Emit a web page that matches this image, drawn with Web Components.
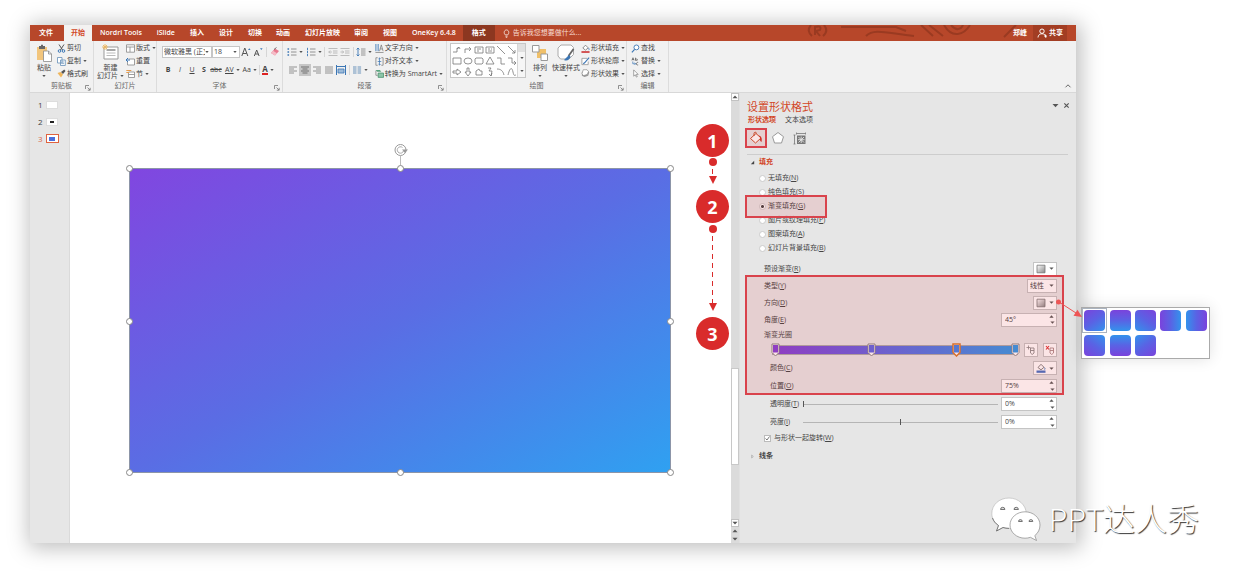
<!DOCTYPE html>
<html lang="zh-CN">
<head>
<meta charset="utf-8">
<title>PowerPoint</title>
<style>
  body {
    margin: 0;
    background: #fff;
    color: #444;
    font: 7px/10px "Open Sans", "Noto Sans CJK SC", sans-serif;
  }
</style>
</head>
<body>
<ppt-app></ppt-app>

<script>
const BASE = `
  * { box-sizing: border-box; }
  button, input, select {
    margin: 0; padding: 0; border: 0; border-radius: 0;
    background: none; color: inherit; font: inherit; appearance: none; outline: 0;
  }
  button { display: inline-flex; align-items: center; white-space: nowrap; }
  svg { display: block; }
`;

function define(name, html, setup) {
  customElements.define(name, class extends HTMLElement {
    constructor() {
      super();
      this.attachShadow({ mode: "open" });
    }

    connectedCallback() {
      const markup = typeof html === "function" ? html(this) : html;
      this.shadowRoot.innerHTML = `<style>${BASE}</style>${markup}`;
      if (setup) setup(this);
    }
  });
}

// name: [viewBox size, content]
const ICONS = {
  caret: [4, `<path d="M.3 1.1h3.400L2 3z" fill="#555"/>`],
  launcher: [6, `<path d="M.5 4V.5H4M2.5 2.5l2.5 2.5M5.2 2.8v2.4H2.8" fill="none" stroke="#777" stroke-width=".8"/>`],
  paste: [18, `<path d="M2 3h10v13H2z" fill="#f2c57c"/><path d="M4 2h6v3H4z" fill="#666"/><path d="M6 .8h2v2H6z" fill="#666"/><path d="M8.500 7h5l3 3v7.500h-8z" fill="#fff" stroke="#8a8a8a" stroke-width=".8"/><path d="M13.500 7v3h3" fill="none" stroke="#8a8a8a" stroke-width=".8"/>`],
  cut: [9, `<path d="M2 .5l3.600 5.500M7 .5L3.400 6" stroke="#555" fill="none"/><circle cx="2.500" cy="7" r="1.300" fill="none" stroke="#3c77b5"/><circle cx="6.500" cy="7" r="1.300" fill="none" stroke="#3c77b5"/>`],
  copy: [9, `<path d="M.5.5h4.500v5.500H.5zM3.500 3h4.800v5.500H3.500z" fill="#fff" stroke="#668fb8" stroke-width=".8"/><path d="M4.600 5h2.500M4.600 6.600h2.500" stroke="#668fb8" stroke-width=".7"/>`],
  brush: [9, `<path d="M.5 4l3-1 2.500 2.500-2 3z" fill="#efb65c"/><path d="M4 3l2 2 2.500-3L7.300.6z" fill="#555"/>`],
  newslide: [18, `<path d="M2 3h14v12H2z" fill="#fff" stroke="#999"/><path d="M4.500 6h9" stroke="#888" stroke-width="1.500"/><path d="M4.500 9h9M4.500 11.500h9" stroke="#bbb"/><path d="M3 0v6M0 3h6M1 1l4 4M5 1L1 5" stroke="#efb65c" stroke-width=".9"/>`],
  layout: [9, `<path d="M.5.8h8v7.400h-8zM.5 3h8M4 3v5" fill="#fff" stroke="#888" stroke-width=".8"/>`],
  reset: [9, `<path d="M2.500 2h6v6h-7V5" fill="#fff" stroke="#888" stroke-width=".8"/><path d="M0 3h4M2 1L0 3l2 2" fill="none" stroke="#3c77b5"/>`],
  section: [9, `<path d="M2.500 3h6v5.500h-6zM2.500 5.500h6" fill="#fff" stroke="#888" stroke-width=".8"/><path d="M.3 1.500h5M.3 3.500h3" stroke="#e59a4b"/>`],
  growfont: [10, `<path d="M.8 9l3-8 3 8M1.900 6.500h3.800" fill="none" stroke="#555"/><path d="M7 3l1.300-1.800L9.600 3z" fill="#3c77b5"/>`],
  shrinkfont: [10, `<path d="M1.300 9l2.400-6 2.400 6M2.300 7h2.900" fill="none" stroke="#555"/><path d="M7 1.300l1.300 1.800 1.300-1.800z" fill="#3c77b5"/>`],
  eraser: [10, `<path d="M1 6l4-4.500L9 4 5 8.500z" fill="#e8798f"/><path d="M1 6l2-2.200 4 2.500L5 8.500z" fill="#f5bcc7"/><path d="M4 2.500L6.500.5" stroke="#555" stroke-width=".8"/>`],
  bullets: [10, `<path d="M.5 2h1.600M.5 5h1.600M.5 8h1.600" stroke="#3c77b5" stroke-width="1.500"/><path d="M4 2h5.500M4 5h5.500M4 8h5.500" stroke="#888" stroke-width=".9"/>`],
  numbering: [10, `<path d="M1.500.8v2.400M1.500 3.900v2.300M1.500 6.900v2.300" stroke="#3c77b5" stroke-width=".9"/><path d="M4 2h5.500M4 5h5.500M4 8h5.500" stroke="#888" stroke-width=".9"/>`],
  outdent: [10, `<path d="M.5 1.500h9M5 4h4.500M5 6h4.500M.5 8.500h9M3.800 5H.8M2.200 3.500L.7 5l1.500 1.500" fill="none" stroke="#b5b5b5" stroke-width=".9"/>`],
  indent: [10, `<path d="M.5 1.500h9M5 4h4.500M5 6h4.500M.5 8.500h9M.5 5h3M2.200 3.500L3.700 5 2.200 6.500" fill="none" stroke="#b5b5b5" stroke-width=".9"/>`],
  spacing: [10, `<path d="M2 1v8M.6 2.500L2 1l1.400 1.500M.6 7.500L2 9l1.400-1.500" fill="none" stroke="#3c77b5" stroke-width=".9"/><path d="M5 2h4.500M5 4h4.500M5 6h4.500M5 8h4.500" stroke="#888" stroke-width=".9"/>`],
  left: [10, `<path d="M1 2h8M1 4h5M1 6h8M1 8h5" stroke="#888" stroke-width=".9"/>`],
  center: [10, `<path d="M1 2h8M2.500 4h5M1 6h8M2.500 8h5" stroke="#666" stroke-width=".9"/>`],
  right: [10, `<path d="M1 2h8M4 4h5M1 6h8M4 8h5" stroke="#888" stroke-width=".9"/>`],
  justify: [10, `<path d="M1 2h8M1 4h8M1 6h8M1 8h8" stroke="#888" stroke-width=".9"/>`],
  distribute: [10, `<path d="M.5 0v10M9.500 0v10M1 1.500h8" stroke="#3c77b5"/><path d="M2 4h6v4H2z" fill="#9dbbd9" stroke="#3c77b5" stroke-width=".8"/>`],
  columns: [10, `<path d="M1 2h3.500M1 4h3.500M1 6h3.500M1 8h3.500M5.600 2h3.500M5.600 4h3.500M5.600 6h3.500M5.600 8h3.500" stroke="#6b93bb"/>`],
  textdir: [10, `<path d="M1 0v8M3.500 0v8" stroke="#3c77b5"/><path d="M5 8l2-7 2 7M5.700 5.500h2.600M.5 9.500h9" fill="none" stroke="#777" stroke-width=".8"/>`],
  aligntext: [10, `<path d="M3 .8H1v8.400h2M7 .8h2v8.400H7" fill="none" stroke="#777" stroke-width=".8"/><path d="M5 1v8M3.800 2.200L5 1l1.200 1.200M3.800 7.800L5 9l1.200-1.200M3 5h4" fill="none" stroke="#3c77b5" stroke-width=".8"/>`],
  smartart: [10, `<path d="M.5 1h5l1.500 2H2.500z" fill="#5aa37e"/><path d="M1 2v5h2" fill="none" stroke="#777" stroke-width=".8"/><path d="M3.500 4.500h6v4.800h-6z" fill="#8cc5a8" stroke="#3f8a64" stroke-width=".8"/>`],
  arrange: [18, `<path d="M6 5h9v9H6z" fill="#f0c069"/><path d="M1.500 1.500h6.500v6.500H1.500zM10 10h6.500v6.500H10z" fill="#fff" stroke="#999"/>`],
  styles: [18, `<path d="M4 1h10l2.500 2.500v7L12 15H3.500L1 12V4z" fill="#fff" stroke="#aaa"/><path d="M16.500 5l-5 7" stroke="#666" stroke-width="1.800"/><path d="M12 11l-5 5c3 1.500 6-.5 6.500-3.500z" fill="#3c77b5"/>`],
  fill: [10, `<path d="M2 4.500L5 1.300l3 3L5 6.800z" fill="#fff" stroke="#666" stroke-width=".8"/><path d="M8.300 4.500c1 1.300 1 1.800.3 2" stroke="#3c77b5" fill="none"/><path d="M.5 8h9v1.800h-9z" fill="#c33"/>`],
  bluefill: [10, `<path d="M2 4.500L5 1.300l3 3L5 6.800z" fill="#fff" stroke="#666" stroke-width=".8"/><path d="M8.300 4.500c1 1.300 1 1.800.3 2" stroke="#3c77b5" fill="none"/><path d="M.5 7.500h9v2.300h-9z" fill="#4472c4"/>`],
  outline: [10, `<path d="M7 1.500H1v7h7V5" fill="#fff" stroke="#888" stroke-width=".8"/><path d="M9 .8L4 6.500l-1.500 1" stroke="#3c77b5" stroke-width="1.300" fill="none"/>`],
  effects: [10, `<path d="M3 1h4l2.200 2.500L8 7.500 4 9 1 7.500V4z" fill="#999"/><path d="M2.500.8h4.200l1.600 2L7 6 3 7.300 1 5.500z" fill="#fff" stroke="#888" stroke-width=".7"/>`],
  find: [10, `<circle cx="6" cy="3.800" r="2.700" fill="#fff" stroke="#3c77b5"/><path d="M4 6L1 9.300" stroke="#3c77b5" stroke-width="1.300"/>`],
  replace: [10, `<path d="M1 3.800L2.200.8l1.200 3M1.400 2.800h1.700M5 .8v3h1.400a.7.700 0 000-1.500H5M8 8.800c-3 .8-2.500-3.500 0-2.800" fill="none" stroke="#555" stroke-width=".8"/><path d="M2 5v2.500h3M4 6.300l1.200 1.200L4 8.700" fill="none" stroke="#3c77b5" stroke-width=".8"/>`],
  select: [10, `<path d="M3 1v7l1.700-1.600L6 9l1-.5-1.200-2.500H8z" fill="#fff" stroke="#777" stroke-width=".7"/>`],
  bulb: [10, `<path d="M3.600 6.500C1.500 4.500 2.500 1 5 1s3.500 3.500 1.400 5.500zM3.800 8h2.400M4.200 9.300h1.600" fill="none" stroke="#fff" stroke-width=".8"/>`],
  person: [10, `<circle cx="5" cy="3.200" r="2.200" fill="none" stroke="#fff"/><path d="M1 9.500c0-5 8-5 8 0M7 8h3M8.500 6.500v3" fill="none" stroke="#fff" stroke-width=".9"/>`],
  bucket: [14, `<path d="M1.500 7.500L7 2.500l5 4.500-5.500 5z" fill="#fff" stroke="#c9502c"/><path d="M5 5V2.500C5 .8 7.500.8 7.500 2.500" fill="none" stroke="#c9502c"/><path d="M9.500 4.500c3 .5 3.800 3 3 6.500-1.500-1-2-2.500-1-4z" fill="#d02e22"/>`],
  pentagon: [14, `<path d="M7 1.500l5.500 4.200-2 6.300h-7l-2-6.300z" fill="#fff" stroke="#999"/>`],
  size: [14, `<path d="M3.500 2.500h9M1.500 4v9M.5 4h2M.5 13h2M3.500 1.500v2M12.500 1.500v2" stroke="#777" stroke-width=".8"/><path d="M4 4.500h8.500V13H4z" fill="#777"/><path d="M8.200 5.500v6.500M5 8.700h6.500M5.500 6l5.500 5.500M11 6l-5.500 5.500" stroke="#e6e6e6" stroke-width=".9"/>`],
  swatch: [10, `<defs><linearGradient id="g" x2="1" y2="1"><stop stop-color="#fff"/><stop offset="1" stop-color="#888"/></linearGradient></defs><path d="M1 1.200h8v7.600H1z" fill="url(#g)" stroke="#777" stroke-width=".8"/>`],
  addstop: [10, `<path d="M4.500 3h3.500v5L6.200 9.500 4.500 8zM4.500 5.500H8" fill="none" stroke="#888" stroke-width=".9"/><path d="M2.500.5v4M.5 2.500h4" stroke="#888" stroke-width=".8"/>`],
  delstop: [10, `<path d="M5 3h3.500v5L6.700 9.500 5 8zM5 5.500h3.500" fill="none" stroke="#a88" stroke-width=".9"/><path d="M1 1l3 3.500M4 1L1 4.500" stroke="#d33" stroke-width="1.100"/>`],
  tri: [6, `<path d="M5 1v4H1z" fill="#444"/>`],
  triopen: [6, `<path d="M2 1.200L4 3 2 4.800z" fill="none" stroke="#999" stroke-width=".7"/>`],
  close: [8, `<path d="M1.500 1.500l5 5M6.500 1.500l-5 5" stroke="#555" stroke-width="1.300"/>`],
  up: [8, `<path d="M1.500 5.300L4 2.800l2.500 2.500" fill="none" stroke="#666"/>`],
  wechat: [50, `<g stroke="#888" stroke-width=".7" fill="#fff"><path d="M18 1C8 1 .8 8 .8 16.500c0 5 2.500 9.300 6.700 12L5.500 34l6.500-3.500c2 .6 4 .9 6 .9 9.500 0 17.200-6.800 17.200-15S27.500 1 18 1z" stroke="#bbb"/><path d="M34 14.800c-8.300 0-15 6-15 13.200s6.700 13.200 15 13.200c1.900 0 3.800-.3 5.400-.9l6.100 3.200-1.700-4.900c3.300-2.500 5.200-6.300 5.200-10.600 0-7.300-6.700-13.200-15-13.200z"/><path d="M1.500 21c1 3 3 5.500 6 7.500L5.500 34l6.500-3.500c2 .6 4 .9 6 .9" fill="none" stroke="#555"/></g><g fill="#ddd" stroke="#666" stroke-width=".9"><path d="M9.500 12.500a2.200 2.200 0 014.400 0zM23 12.500a2.200 2.200 0 014.400 0zM27.500 24.500a1.900 1.900 0 013.800 0zM38 24.500a1.900 1.900 0 013.800 0z"/></g>`],
};

define("ui-icon", el => {
  const [box, art] = ICONS[el.getAttribute("name")];
  const size = el.getAttribute("size") || 10;
  return `
    <style>:host { display: block; flex: none; }</style>
    <svg width="${size}" height="${size}" viewBox="0 0 ${box} ${box}" aria-hidden="true">${art}</svg>
  `;
});

/* ---------- title bar ---------- */

define("title-bar", `
  <style>
    :host { display: flex; position: relative; height: 16px; background: #b7472a; color: #fff; font-weight: 600; }
    nav { display: flex; }
    a { display: flex; align-items: center; padding: 0 7px; color: #fff; text-decoration: none; white-space: nowrap; }
    a + a { margin-left: 1px; }
    .file { padding: 0 10px 0 9px; }
    a.active { background: #f3f2f1; color: #d24726; }
    a.context { background: #8c3720; padding: 0 9px; margin-left: 0; }
    a.tight { margin-left: 0; }
    .tell { display: flex; align-items: center; gap: 2px; margin-left: 7px; }
    .tell input { width: 90px; font-weight: 400; }
    .tell input::placeholder { color: #f8ddd4; opacity: 1; }
    .art { position: absolute; right: 30px; top: 0; }
    .user { display: flex; align-items: center; margin-left: auto; padding-right: 6px; position: relative; }
    .share { align-self: stretch; gap: 2px; padding: 0 4px; margin: 0 9px 0 0; background: #a23d23; position: relative; }
  </style>
  <nav>
    <a href="#" class="file">文件</a><a href="#" class="active">开始</a><a href="#">Nordri Tools</a><a href="#">iSlide</a>
    <a href="#">插入</a><a href="#">设计</a><a href="#">切换</a><a href="#" class="tight">动画</a><a href="#">幻灯片放映</a>
    <a href="#" class="tight">审阅</a><a href="#">视图</a><a href="#">OneKey 6.4.8</a><a href="#" class="context">格式</a>
  </nav>
  <label class="tell"><ui-icon name="bulb" size="9"></ui-icon><input type="text" aria-label="告诉我" placeholder="告诉我您想要做什么..."></label>
  <svg class="art" width="240" height="16" viewBox="0 0 240 16" fill="none" stroke="#9a3a21" stroke-width="2" aria-hidden="true">
    <path d="M5 0q-5 6 1 11M18 0q5 6-1 11M9 10V2q7-2 5 3l-4 1 4 5M35 2h55l10 4M60 11c8-8 20-3 48 0M115 0l12 11M123 0l14 11M138 0c8 14 20 10 26 0M145 0c5 6 10 5 12 0M198 12l12-12"/>
  </svg>
  <div class="user"><span>郑峰</span></div>
  <button class="share"><ui-icon name="person"></ui-icon>共享</button>
`);

/* ---------- ribbon parts ---------- */

define("ribbon-group", el => `
  <style>
    :host { display: flex; flex-direction: column; position: relative; border-right: 1px solid #dcdcdc; padding-top: 1px; }
    .body { display: flex; height: 38px; }
    .name { text-align: center; color: #666; line-height: 12px; }
    .launch { position: absolute; right: 2px; bottom: 1px; }
  </style>
  <div class="body"><slot></slot></div>
  <div class="name">${el.getAttribute("label")}</div>
  ${el.hasAttribute("launch") ? `<button class="launch" aria-label="更多"><ui-icon name="launcher" size="6"></ui-icon></button>` : ""}
`);

define("small-button", el => `
  <style>
    :host { display: flex; height: 13px; align-items: center; }
    button { gap: 1px; }
    ui-icon[name=caret] { margin-left: 1px; }
  </style>
  <button><ui-icon name="${el.getAttribute("icon")}" size="9"></ui-icon><slot></slot>${el.hasAttribute("menu") ? `<ui-icon name="caret" size="4"></ui-icon>` : ""}</button>
`);

define("big-button", el => `
  <style>
    :host { display: block; }
    button { flex-direction: column; line-height: 8px; padding-top: 2px; gap: 2px; }
    .text { display: flex; flex-direction: column; align-items: center; }
    .last { display: flex; align-items: center; gap: 2px; min-height: 7px; }
  </style>
  <button>
    <ui-icon name="${el.getAttribute("icon")}" size="18"></ui-icon>
    <span class="text"><slot></slot><span class="last">${el.getAttribute("second") || ""}<ui-icon name="caret" size="4"></ui-icon></span></span>
  </button>
`);

define("tool-button", el => `
  <style>
    :host { display: flex; }
    button { min-width: 12px; height: 12px; justify-content: center; gap: 2px; }
    :host([pressed]) button { background: #c6c6c6; }
  </style>
  <button aria-label="${el.getAttribute("label") || ""}">
    ${el.hasAttribute("icon") ? `<ui-icon name="${el.getAttribute("icon")}"></ui-icon>` : ""}<slot></slot>${el.hasAttribute("menu") ? `<ui-icon name="caret" size="4"></ui-icon>` : ""}
  </button>
`);

const SHAPES = [
  "M1 7h4V3h2M5 4l2-2 1 2", "M2 8V4h5M6 2l2 2-2 2", "M1 2h8v6H1zM3 4h4M3 6h2", "M1 2h8v6H1zM3 4h2M6 4h1M3 6h4", "M1 1l8 8", "M1 1l7 7M8 5v3H5",
  "M1 2h8v6H1z", "M1 5a4 3 0 108 0 4 3 0 10-8 0z", "M2 2h6l1 1v4l-1 1H2L1 7V3z", "M5 1l4 7H1z", "M1 2h4v6h4", "M1 2h4v5h4M7 5l2 2-2 2",
  "M1 4h4V2l4 3-4 3V6H1z", "M4 1h2v4h2L5 9 2 5h2z", "M2 8V4l3-2 1 2h2v4z", "M3 1h3L4 4h3L6 9M4 7l2 2 1-3", "M1 2c4 0 6 2 7 6", "M1 8c2-8 4-8 5-3s2 3 3 3",
];

define("shape-gallery", `
  <style>
    :host { display: flex; height: 35px; margin: 1px 0 0; border: 1px solid #c6c6c6; background: #fff; }
    .shapes { display: grid; grid-template-columns: repeat(6, 11px); grid-template-rows: repeat(3, 11px); }
    .shapes button { justify-content: center; }
    .side { display: grid; width: 8px; border-left: 1px solid #d6d6d6; background: #f6f6f6; }
    .side button { justify-content: center; }
    .side button:first-child { background: #e0e0e0; }
  </style>
  <div class="shapes">${SHAPES.map(d => `<button aria-label="形状"><svg width="10" height="10" viewBox="0 0 10 10" fill="none" stroke="#777" stroke-width=".8"><path d="${d}"/></svg></button>`).join("")}</div>
  <div class="side"><button aria-label="上"></button><button aria-label="下"><ui-icon name="caret" size="4"></ui-icon></button><button aria-label="全部"><ui-icon name="caret" size="4"></ui-icon></button></div>
`);

define("ribbon-bar", `
  <style>
    :host { display: flex; position: relative; height: 52px; background: #f1f1f1; border-bottom: 1px solid #d8d8d8; }
    .col { display: flex; flex-direction: column; }
    .rows { display: flex; flex-direction: column; padding-top: 1px; }
    .row { display: flex; align-items: center; height: 18px; }
    .clip { width: 64px; } .slides { width: 63px; } .font { width: 126px; }
    .para { width: 164px; } .draw { width: 180px; } .edit { width: 42px; }
    .paste { margin: 0 4px 0 5px; }
    .new { margin: 0 2px 0 3px; }
    .arrange { margin: 0 2px 0 5px; }
    .styles { margin: 0 1px; }
    .combo { display: flex; align-items: center; height: 12px; border: 1px solid #c6c6c6; background: #fff; padding: 0 2px 0 1px; }
    .combo select { flex: 1; min-width: 0; }
    .face { width: 50px; } .pt { width: 28px; }
    .font .rows { padding-left: 5px; }
    .para .rows { padding-left: 4px; }
    .bar { width: 1px; height: 10px; background: #d6d6d6; margin: 0 2px; }
    .list { margin-right: 3px; }
    .a { border-bottom: 2px solid #d22; line-height: 8px; font-size: 8px; }
    .para .col { margin-left: auto; padding-right: 3px; }
    shape-gallery { margin-left: 3px; }
    .edit .col { padding-left: 4px; }
    .fold { position: absolute; right: 4px; bottom: 2px; }
    .text tool-button + tool-button[menu] { margin-left: 3px; }
  </style>
  <ribbon-group class="clip" label="剪贴板" launch>
    <big-button class="paste" icon="paste">粘贴</big-button>
    <div class="col">
      <small-button icon="cut">剪切</small-button>
      <small-button icon="copy" menu>复制</small-button>
      <small-button icon="brush">格式刷</small-button>
    </div>
  </ribbon-group>
  <ribbon-group class="slides" label="幻灯片">
    <big-button class="new" icon="newslide" second="幻灯片">新建</big-button>
    <div class="col">
      <small-button icon="layout" menu>版式</small-button>
      <small-button icon="reset">重置</small-button>
      <small-button icon="section" menu>节</small-button>
    </div>
  </ribbon-group>
  <ribbon-group class="font" label="字体" launch>
    <div class="rows">
      <div class="row">
        <span class="combo face"><select aria-label="字体"><option>微软雅黑 (正文</option></select><ui-icon name="caret" size="4"></ui-icon></span>
        <span class="combo pt"><select aria-label="字号"><option>18</option></select><ui-icon name="caret" size="4"></ui-icon></span>
        <tool-button icon="growfont" label="增大字号"></tool-button>
        <tool-button icon="shrinkfont" label="减小字号"></tool-button>
        <span class="bar"></span>
        <tool-button icon="eraser" label="清除格式"></tool-button>
      </div>
      <div class="row text">
        <tool-button><b>B</b></tool-button><tool-button><i>I</i></tool-button><tool-button><u>U</u></tool-button>
        <tool-button><b>S</b></tool-button><tool-button><s>abc</s></tool-button>
        <tool-button menu><u>AV</u></tool-button><tool-button menu>Aa</tool-button>
        <span class="bar"></span><tool-button menu><b class="a">A</b></tool-button>
      </div>
    </div>
  </ribbon-group>
  <ribbon-group class="para" label="段落" launch>
    <div class="rows">
      <div class="row">
        <tool-button class="list" icon="bullets" label="项目符号" menu></tool-button>
        <tool-button icon="numbering" label="编号" menu></tool-button><span class="bar"></span>
        <tool-button icon="outdent" label="减少缩进"></tool-button>
        <tool-button icon="indent" label="增加缩进"></tool-button><span class="bar"></span>
        <tool-button icon="spacing" label="行距" menu></tool-button>
      </div>
      <div class="row">
        <tool-button icon="left" label="左对齐"></tool-button>
        <tool-button icon="center" label="居中" pressed></tool-button>
        <tool-button icon="right" label="右对齐"></tool-button>
        <tool-button icon="justify" label="两端对齐"></tool-button>
        <tool-button icon="distribute" label="分散对齐"></tool-button><span class="bar"></span>
        <tool-button icon="columns" label="分栏" menu></tool-button>
      </div>
    </div>
    <div class="col">
      <small-button icon="textdir" menu>文字方向</small-button>
      <small-button icon="aligntext" menu>对齐文本</small-button>
      <small-button icon="smartart" menu>转换为 SmartArt</small-button>
    </div>
  </ribbon-group>
  <ribbon-group class="draw" label="绘图" launch>
    <shape-gallery></shape-gallery>
    <big-button class="arrange" icon="arrange">排列</big-button>
    <big-button class="styles" icon="styles">快速样式</big-button>
    <div class="col">
      <small-button icon="fill" menu>形状填充</small-button>
      <small-button icon="outline" menu>形状轮廓</small-button>
      <small-button icon="effects" menu>形状效果</small-button>
    </div>
  </ribbon-group>
  <ribbon-group class="edit" label="编辑">
    <div class="col">
      <small-button icon="find">查找</small-button>
      <small-button icon="replace" menu>替换</small-button>
      <small-button icon="select" menu>选择</small-button>
    </div>
  </ribbon-group>
  <button class="fold" aria-label="折叠功能区"><ui-icon name="up" size="8"></ui-icon></button>
`);

/* ---------- slides ---------- */

define("slide-thumbs", `
  <style>
    :host { display: block; width: 40px; background: #e6e6e6; border-right: 1px solid #dadada; }
    ol { list-style: none; margin: 0; padding: 3px 0 0 8px; }
    li { display: flex; align-items: center; gap: 3px; height: 17px; font-size: 8px; }
    .thumb { display: flex; align-items: center; justify-content: center; width: 12px; height: 8px; background: #fff; border: 1px solid #ddd; }
    .thumb i { width: 4px; height: 2px; background: #222; }
    .on { color: #d9694a; }
    .on .thumb { width: 13px; height: 9px; border: 1px solid #e0623f; }
    .on .thumb i { width: 6px; height: 4px; background: #4b6fdc; }
  </style>
  <ol>
    <li>1<span class="thumb"></span></li>
    <li>2<span class="thumb"><i></i></span></li>
    <li class="on">3<span class="thumb"><i></i></span></li>
  </ol>
`);

define("slide-canvas", `
  <style>
    :host { display: flex; flex: 1; min-width: 0; background: #fff; padding: 75px 60px 70px 59px; }
    .shape { position: relative; flex: 1; background: linear-gradient(to bottom right, #8146e0, #5a6de4 50%, #2fa1f1); outline: 1px solid #8c95a8; outline-offset: -1px; }
    .shape i { position: absolute; width: 7px; height: 7px; margin: -3px; border: 1px solid #888; border-radius: 50%; background: #fff; }
    .rotate { position: absolute; left: 50%; top: -26px; margin-left: -8px; }
  </style>
  <div class="shape">
    <svg class="rotate" width="17" height="26" viewBox="0 0 17 26" fill="none" stroke="#999" aria-hidden="true">
      <path d="M8.500 14v9" stroke="#bbb"/>
      <circle cx="8.500" cy="8" r="5.500"/><path d="M11.500 9a3.200 3.200 0 11-1-3.500" stroke="#aaa"/><path d="M10 7.500h6l-3 3.500z" fill="#999" stroke="none"/>
    </svg>
    <i style="left:0;top:0"></i><i style="left:50%;top:0"></i><i style="right:0;top:0"></i>
    <i style="left:0;top:50%"></i><i style="right:0;top:50%"></i>
    <i style="left:0;bottom:0"></i><i style="left:50%;bottom:0"></i><i style="right:0;bottom:0"></i>
  </div>
`);

define("scroll-lane", `
  <style>
    :host { display: flex; flex-direction: column; width: 10px; background: #dbdbdb; border-right: 2px solid #e0e0e0; }
    button { height: 8px; width: 8px; justify-content: center; background: #fff; border: 1px solid #c2c2c2; }
    .up { transform: rotate(180deg); }
    .gap { flex: 269; }
    .thumb { flex: 96; background: #fff; border: 1px solid #c8c8c8; }
    .rest { flex: 54; }
    .step { background: none; border: 0; }
  </style>
  <button class="up" aria-label="向上滚动"><ui-icon name="caret" size="6"></ui-icon></button>
  <span class="gap"></span><span class="thumb"></span><span class="rest"></span>
  <button aria-label="向下滚动"><ui-icon name="caret" size="6"></ui-icon></button>
  <button class="step up" aria-label="上一张"><ui-icon name="caret" size="6"></ui-icon></button>
  <button class="step" aria-label="下一张"><ui-icon name="caret" size="6"></ui-icon></button>
`);

/* ---------- format pane ---------- */

const accessKey = text => text.replace(/\((\w)\)/, "(<u>$1</u>)");

define("menu-field", el => `
  <style>
    :host { display: flex; align-items: center; justify-content: space-between; height: 17px; }
    button { height: 14px; width: 24px; gap: 3px; justify-content: center; background: #fff; border: 1px solid #c4c4c4; }
  </style>
  <label for="b">${accessKey(el.getAttribute("label"))}</label>
  <button id="b"><ui-icon name="${el.getAttribute("icon")}"></ui-icon><ui-icon name="caret" size="5"></ui-icon></button>
`);

define("number-field", el => `
  <style>
    :host { display: flex; align-items: center; height: 17px; }
    .name { flex: 1; }
    .range { display: flex; flex: 1; align-items: center; }
    .range label { width: 33px; }
    .range input { flex: 1; min-width: 0; height: 9px; margin-right: 3px; background: linear-gradient(#b5b5b5, #b5b5b5) center / 100% 1px no-repeat; }
    input::-webkit-slider-thumb { appearance: none; width: 1px; height: 6px; background: #555; }
    .box { display: flex; width: 56px; height: 14px; background: #fff; border: 1px solid #c4c4c4; }
    .box input { flex: 1; min-width: 0; padding-left: 3px; }
    .spin { display: flex; flex-direction: column; width: 8px; }
    .spin button { flex: 1; justify-content: center; }
    .spin button:first-child { transform: rotate(180deg); }
  </style>
  ${el.hasAttribute("range")
    ? `<div class="range"><label for="r">${accessKey(el.getAttribute("label"))}</label><input id="r" type="range" min="0" max="100" value="${el.getAttribute("range")}"></div>`
    : `<label class="name" for="n">${accessKey(el.getAttribute("label"))}</label>`}
  <div class="box">
    <input id="n" type="text" aria-label="${el.getAttribute("label")}" value="${el.getAttribute("value")}">
    <span class="spin"><button aria-label="增加"><ui-icon name="caret" size="5"></ui-icon></button><button aria-label="减少"><ui-icon name="caret" size="5"></ui-icon></button></span>
  </div>
`);

define("gradient-stops", `
  <style>
    :host { display: flex; align-items: center; gap: 5px; height: 18px; }
    .bar { position: relative; flex: 1; height: 10px; margin: 0 1px 0 2px; border: 1px solid #aaa; background: linear-gradient(to right, #8540d6, #5b6ce4 50%, #3198e8); }
    .stop { position: absolute; top: -3px; margin-left: -4px; }
    .tool { width: 14px; height: 14px; justify-content: center; background: #fff; border: 1px solid #c4c4c4; }
  </style>
  <div class="bar">
    ${[[1, "#8540d6"], [40, "#5f67e3"], [75, "#4583e6", "#d97a2b"], [99, "#3198e8"]].map(([at, fill, edge]) => `
      <button class="stop" style="left:${at}%" aria-label="光圈 ${at}%">
        <svg width="9" height="14" viewBox="0 0 9 14"><path d="M1 1h7v8.500L4.500 13 1 9.500z" fill="#fff" stroke="${edge || "#888"}" stroke-width="${edge ? 1.5 : 1}"/><path d="M2 2h5v7.500H2z" fill="${fill}"/></svg>
      </button>`).join("")}
  </div>
  <button class="tool" aria-label="添加渐变光圈"><ui-icon name="addstop"></ui-icon></button>
  <button class="tool" aria-label="删除渐变光圈"><ui-icon name="delstop"></ui-icon></button>
`);

const FILLS = ["无填充(N)", "纯色填充(S)", "渐变填充(G)", "图片或纹理填充(P)", "图案填充(A)", "幻灯片背景填充(B)"];

define("format-pane", `
  <style>
    :host { display: block; width: 336px; background: #e6e6e6; padding: 7px 19px 0 7px; }
    header { display: flex; justify-content: space-between; }
    h2 { margin: 0; font-size: 11px; line-height: 14px; font-weight: 400; color: #d24726; }
    .win { display: flex; gap: 4px; margin-right: -13px; height: 10px; }
    nav { display: flex; gap: 9px; padding: 0 0 3px 1px; line-height: 11px; }
    nav a { color: inherit; text-decoration: none; }
    nav .on { color: #d24726; font-weight: 700; }
    .icons { display: flex; align-items: center; gap: 8px; height: 20px; padding-left: 2px; }
    .icons button { position: relative; }
    .mark { position: absolute; z-index: 1; border: 2px solid #d9434c; background: rgba(220, 40, 50, .12); pointer-events: none; }
    .icons .mark { inset: -3px -4px; }
    h3 { display: flex; align-items: center; gap: 4px; margin: 0; font-size: 7px; line-height: 14px; }
    .fill { margin: 6px -11px 0 0; border-top: 1px solid #cdcdcd; color: #d24726; padding: 0 0 2px 3px; }
    fieldset { margin: 0; padding: 0 0 5px 12px; border: 0; }
    .radio { display: flex; align-items: center; gap: 2px; height: 14px; position: relative; width: max-content; }
    .radio input { width: 7px; height: 7px; border: 1px solid #ccc; border-radius: 50%; background: #fff; }
    .radio input:checked { background: radial-gradient(circle, #444 1px, #fff 2px); }
    .radio .mark { top: -4px; left: -14px; width: 82px; height: 23px; }
    .fields { padding-left: 17px; }
    .hot { position: relative; }
    .hot > .mark { inset: -2px -7px 0 -19px; }
    .type { display: flex; align-items: center; justify-content: space-between; height: 17px; }
    .drop { display: flex; align-items: center; width: 30px; height: 14px; padding: 0 2px; background: #fff; border: 1px solid #c4c4c4; }
    .drop select { flex: 1; min-width: 0; }
    .stops-name { line-height: 13px; }
    .sub { padding-left: 6px; }
    .sub > * { height: 18px; }
    .check { display: flex; align-items: center; gap: 3px; height: 14px; }
    .check input { width: 7px; height: 7px; border: 1px solid #bbb; background: #fff; }
    .check .box { position: relative; display: flex; }
    .check svg { position: absolute; inset: 0; pointer-events: none; }
    .line { padding: 4px 0 0 3px; }
  </style>
  <header>
    <h2>设置形状格式</h2>
    <div class="win"><button aria-label="选项"><ui-icon name="caret" size="7"></ui-icon></button><button aria-label="关闭"><ui-icon name="close" size="7"></ui-icon></button></div>
  </header>
  <nav><a href="#" class="on">形状选项</a><a href="#">文本选项</a></nav>
  <div class="icons">
    <button aria-label="填充与线条"><ui-icon name="bucket" size="14"></ui-icon><span class="mark"></span></button>
    <button aria-label="效果"><ui-icon name="pentagon" size="14"></ui-icon></button>
    <button aria-label="大小与属性"><ui-icon name="size" size="14"></ui-icon></button>
  </div>
  <h3 class="fill"><ui-icon name="tri" size="5"></ui-icon>填充</h3>
  <fieldset aria-label="填充">
    ${FILLS.map((text, i) => `<label class="radio"><input type="radio" name="fill"${i === 2 ? " checked" : ""}><span>${accessKey(text)}</span>${i === 2 ? `<span class="mark"></span>` : ""}</label>`).join("")}
  </fieldset>
  <div class="fields">
    <menu-field label="预设渐变(R)" icon="swatch"></menu-field>
    <div class="hot">
      <span class="mark"></span>
      <div class="type"><label for="type">类型(<u>Y</u>)</label><span class="drop"><select id="type"><option>线性</option></select><ui-icon name="caret" size="5"></ui-icon></span></div>
      <menu-field label="方向(D)" icon="swatch"></menu-field>
      <number-field label="角度(E)" value="45°"></number-field>
      <div class="stops-name">渐变光圈</div>
      <div class="sub">
        <gradient-stops></gradient-stops>
        <menu-field label="颜色(C)" icon="bluefill"></menu-field>
        <number-field label="位置(O)" value="75%"></number-field>
      </div>
    </div>
    <div class="sub">
      <number-field label="透明度(T)" range="0" value="0%"></number-field>
      <number-field label="亮度(I)" range="50" value="0%"></number-field>
    </div>
    <label class="check"><span class="box"><input type="checkbox" checked><svg width="7" height="7" viewBox="0 0 7 7" fill="none" stroke="#555" stroke-width=".8"><path d="M1.500 3.500L3 5l2.500-3.500"/></svg></span><span>与形状一起旋转(<u>W</u>)</span></label>
  </div>
  <h3 class="line"><ui-icon name="triopen" size="5"></ui-icon>线条</h3>
`);

/* ---------- annotations ---------- */

define("step-guide", `
  <style>
    :host { display: flex; flex-direction: column; align-items: center; color: #d92b2b; }
    b { display: flex; align-items: center; justify-content: center; width: 33px; height: 33px; border-radius: 50%; background: #d92b2b; color: #fff; font-size: 18px; }
    .link { display: flex; flex-direction: column; align-items: center; height: 33px; padding: 1px 0 6px; }
    .long { height: 94px; padding-top: 2px; }
    .dot { width: 8px; height: 8px; border-radius: 50%; background: currentColor; }
    .dash { flex: 1; width: 1px; margin-top: 3px; background: repeating-linear-gradient(currentColor 0 5px, transparent 5px 9px); }
    .tip { border: 4px solid transparent; border-top: 8px solid currentColor; border-bottom: 0; }
  </style>
  <b>1</b>
  <div class="link"><span class="dot"></span><span class="dash"></span><span class="tip"></span></div>
  <b>2</b>
  <div class="link long"><span class="dot"></span><span class="dash"></span><span class="tip"></span></div>
  <b>3</b>
`);

const DIRECTIONS = ["145deg", "180deg", "215deg", "90deg", "270deg", "35deg", "0deg", "325deg"];

define("direction-menu", `
  <style>
    :host { display: block; }
    .menu { display: grid; grid-template-columns: repeat(5, 1fr); width: 129px; background: #fff; border: 1px solid #aaa; box-shadow: 0 0 14px rgba(0, 0, 0, .12); }
    button { justify-content: center; height: 25px; border: 1px solid transparent; }
    button:first-child { border-color: #aab3bf; }
    i { width: 21px; height: 21px; border-radius: 4px; }
    svg { position: absolute; left: -26px; top: -9px; }
  </style>
  <div class="menu">${DIRECTIONS.map((d, i) => `<button aria-label="方向 ${i + 1}"><i style="background:linear-gradient(${d},#7a43dc,#5a62e4,#3393ec)"></i></button>`).join("")}</div>
  <svg width="28" height="22" viewBox="0 0 28 22" aria-hidden="true"><circle cx="3.500" cy="4" r="2.500" fill="#ee5555"/><path d="M4 4l17 11" stroke="#ee5555"/><path d="M27 19l-8.500-1.200 4-6z" fill="#ee5555"/></svg>
`);

define("water-mark", `
  <style>
    :host { display: flex; align-items: center; gap: 8px; color: #fff; font-size: 32px; line-height: 44px; font-weight: 300; white-space: nowrap; text-shadow: 1px 1px 1px #333; }
    ui-icon { height: 44px; }
  </style>
  <ui-icon name="wechat" size="50"></ui-icon><span><slot></slot></span>
`);

/* ---------- page ---------- */

define("ppt-app", `
  <style>
    :host { display: flex; position: relative; min-height: 100vh; box-sizing: border-box; padding: 25px 164px 33px 30px; overflow: hidden; }
    .window { display: flex; flex-direction: column; flex: 1; min-width: 0; position: relative; box-shadow: 2px 2px 20px 3px rgba(0, 0, 0, .26); }
    main { display: flex; flex: 1; position: relative; }
    scroll-lane { margin-right: -1px; }
    step-guide { position: absolute; right: 347px; top: 31px; }
    direction-menu { position: absolute; left: 100%; top: 214px; margin-left: 5px; z-index: 2; }
    water-mark { position: absolute; right: 41px; bottom: 35px; }
  </style>
  <div class="window">
    <title-bar></title-bar>
    <ribbon-bar></ribbon-bar>
    <main>
      <slide-thumbs></slide-thumbs>
      <slide-canvas></slide-canvas>
      <scroll-lane></scroll-lane>
      <format-pane></format-pane>
      <step-guide></step-guide>
      <direction-menu></direction-menu>
    </main>
  </div>
  <water-mark>PPT达人秀</water-mark>
`);
</script>
</body>
</html>
